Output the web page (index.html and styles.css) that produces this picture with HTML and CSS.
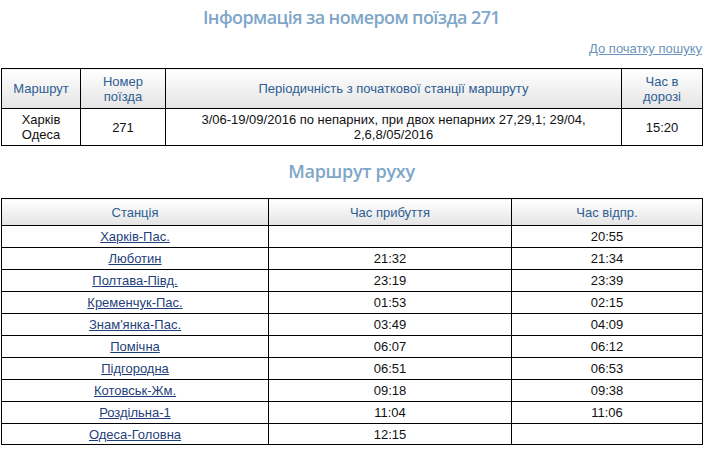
FILE: index.html
```html
<!DOCTYPE html>
<html lang="uk">
<head>
<meta charset="utf-8">
<link rel="stylesheet" href="styles.css">
</head>
<body>
<div class="page">
  <h1 class="title">Інформація за номером поїзда 271</h1>
  <div class="back"><a href="#">До початку пошуку</a></div>
  <table class="info">
    <colgroup>
      <col class="c1"><col class="c2"><col class="c3"><col class="c4">
    </colgroup>
    <thead>
      <tr>
        <th>Маршрут</th>
        <th>Номер<br>поїзда</th>
        <th>Періодичність з початкової станції маршруту</th>
        <th>Час в<br>дорозі</th>
      </tr>
    </thead>
    <tbody>
      <tr>
        <td>Харків<br>Одеса</td>
        <td>271</td>
        <td>3/06-19/09/2016 по непарних, при двох непарних 27,29,1; 29/04,<br>2,6,8/05/2016</td>
        <td>15:20</td>
      </tr>
    </tbody>
  </table>
  <h2 class="subtitle">Маршрут руху</h2>
  <table class="route">
    <colgroup>
      <col class="r1"><col class="r2"><col class="r3">
    </colgroup>
    <thead>
      <tr><th>Станція</th><th>Час прибуття</th><th>Час відпр.</th></tr>
    </thead>
    <tbody>
      <tr><td><a href="#">Харків-Пас.</a></td><td></td><td>20:55</td></tr>
      <tr><td><a href="#">Люботин</a></td><td>21:32</td><td>21:34</td></tr>
      <tr><td><a href="#">Полтава-Півд.</a></td><td>23:19</td><td>23:39</td></tr>
      <tr><td><a href="#">Кременчук-Пас.</a></td><td>01:53</td><td>02:15</td></tr>
      <tr><td><a href="#">Знам'янка-Пас.</a></td><td>03:49</td><td>04:09</td></tr>
      <tr><td><a href="#">Помічна</a></td><td>06:07</td><td>06:12</td></tr>
      <tr><td><a href="#">Підгородна</a></td><td>06:51</td><td>06:53</td></tr>
      <tr><td><a href="#">Котовськ-Жм.</a></td><td>09:18</td><td>09:38</td></tr>
      <tr><td><a href="#">Роздільна-1</a></td><td>11:04</td><td>11:06</td></tr>
      <tr><td><a href="#">Одеса-Головна</a></td><td>12:15</td><td></td></tr>
    </tbody>
  </table>
</div>
</body>
</html>
```

FILE: styles.css
```css
html, body {
  margin: 0;
  padding: 0;
  background: #ffffff;
}
body {
  font-family: "Liberation Sans", Arial, sans-serif;
  font-size: 13px;
  color: #222;
}
.page {
  width: 701px;
  padding: 0 1px;
}
.title {
  margin: 0;
  padding-top: 5px;
  height: 33px;
  font-family: "Open Sans", "DejaVu Sans", sans-serif;
  font-weight: 600;
  font-size: 18px;
  line-height: 24px;
  color: #7ea6c8;
  text-align: center;
  letter-spacing: -0.6px;
}
.back {
  text-align: right;
  height: 30px;
  line-height: 18px;
  padding-top: 2px;
  box-sizing: border-box;
}
.back a {
  color: #6b93b9;
  text-decoration: underline;
}
table {
  border-collapse: collapse;
  width: 701px;
  table-layout: fixed;
}
th, td {
  border: 1px solid #000;
  text-align: center;
  vertical-align: middle;
  padding: 0 4px;
  line-height: 15px;
}
th {
  font-weight: normal;
  color: #2d5d93;
  background: linear-gradient(#ffffff, #e4e4e4);
}
td {
  color: #111;
}
.info .c1 { width: 79px; }
.info .c2 { width: 85px; }
.info .c3 { width: 456px; }
.info .c4 { width: 81px; }
.info thead tr { height: 40px; }
.info tbody tr { height: 37px; }
.subtitle {
  margin: 0;
  height: 52px;
  padding-top: 13px;
  box-sizing: border-box;
  font-family: "Open Sans", "DejaVu Sans", sans-serif;
  font-weight: 600;
  font-size: 18px;
  line-height: 24px;
  color: #7ea6c8;
  text-align: center;
  letter-spacing: -0.3px;
}
.route .r1 { width: 267px; }
.route .r2 { width: 243px; }
.route .r3 { width: 191px; }
.route thead tr { height: 27px; }
.route tbody tr { height: 22px; }
.route tbody tr:last-child { height: 21px; }
.route a {
  color: #1f3f7a;
  text-decoration: underline;
}
```
